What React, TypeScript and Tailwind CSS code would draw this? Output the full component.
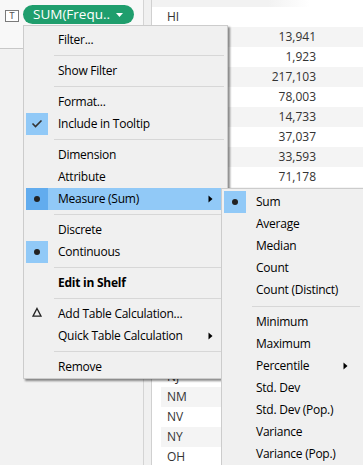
import React from "react";

const font = { fontFamily: '"Open Sans", "Noto Sans", sans-serif' };

// only rows whose label is not covered by the menus carry text
const states = [
  "HI", "", "", "", "", "", "", "", "", "", "", "",
  "", "", "", "", "", "", "NJ", "NM", "NV", "NY", "OH",
];

const values = [
  "", "13,941", "1,923", "217,103", "78,003", "14,733", "37,037", "33,593", "71,178",
];

type Item =
  | { sep: true }
  | {
      sep?: false;
      label: string;
      icon?: "check" | "dot" | "delta";
      checked?: boolean;
      active?: boolean;
      bold?: boolean;
      arrow?: boolean;
    };

const mainItems: Item[] = [
  { label: "Filter..." },
  { sep: true },
  { label: "Show Filter" },
  { sep: true },
  { label: "Format..." },
  { label: "Include in Tooltip", icon: "check", checked: true },
  { sep: true },
  { label: "Dimension" },
  { label: "Attribute" },
  { label: "Measure (Sum)", icon: "dot", checked: true, active: true, arrow: true },
  { sep: true },
  { label: "Discrete" },
  { label: "Continuous", icon: "dot", checked: true },
  { sep: true },
  { label: "Edit in Shelf", bold: true },
  { sep: true },
  { label: "Add Table Calculation...", icon: "delta" },
  { label: "Quick Table Calculation", arrow: true },
  { sep: true },
  { label: "Remove" },
];

const subItems: Item[] = [
  { label: "Sum", icon: "dot", checked: true },
  { label: "Average" },
  { label: "Median" },
  { label: "Count" },
  { label: "Count (Distinct)" },
  { sep: true },
  { label: "Minimum" },
  { label: "Maximum" },
  { label: "Percentile", arrow: true },
  { label: "Std. Dev" },
  { label: "Std. Dev (Pop.)" },
  { label: "Variance" },
  { label: "Variance (Pop.)" },
];

function MenuIcon({ kind }: { kind?: "check" | "dot" | "delta" }) {
  if (kind === "check")
    return (
      <svg width="22" height="22" viewBox="0 0 22 22">
        <path d="M6.5 10.5 L9.5 13.5 L15.5 7.5" fill="none" stroke="#333" strokeWidth="1.6" />
      </svg>
    );
  if (kind === "dot")
    return (
      <svg width="22" height="22" viewBox="0 0 22 22">
        <circle cx="11" cy="11" r="3" fill="#222" />
      </svg>
    );
  if (kind === "delta")
    return (
      <svg width="22" height="22" viewBox="0 0 22 22">
        <path d="M11 5.5 L15 13.2 L7 13.2 Z" fill="none" stroke="#222" strokeWidth="1.3" />
      </svg>
    );
  return null;
}

function Arrow() {
  return (
    <svg width="5" height="8" viewBox="0 0 5 8" className="shrink-0">
      <path d="M0.5 0.5 L4.5 4 L0.5 7.5 Z" fill="#000" />
    </svg>
  );
}

function MenuList({
  items,
  sepClass,
  sepHeight,
  arrowClass,
}: {
  items: Item[];
  sepClass: string;
  sepHeight: string;
  arrowClass: string;
}) {
  return (
    <>
      {items.map((it, i) =>
        it.sep ? (
          <div key={i} className={`flex items-center ${sepHeight}`}>
            <div className={`h-px bg-[#d7d7d7] ${sepClass}`} />
          </div>
        ) : (
          <div
            key={i}
            className={`flex h-[22px] items-center ${it.active ? "bg-[#91c9f7]" : ""}`}
          >
            <div
              className={`h-[22px] w-[22px] shrink-0 ${
                it.checked ? (it.active ? "bg-[#62acee]" : "bg-[#91c9f7]") : ""
              }`}
            >
              <MenuIcon kind={it.icon} />
            </div>
            <span
              className={`ml-[10px] flex-1 whitespace-nowrap tracking-[-0.25px] ${
                it.bold ? "font-bold" : ""
              }`}
            >
              {it.label}
            </span>
            {it.arrow && (
              <span className={arrowClass}>
                <Arrow />
              </span>
            )}
          </div>
        )
      )}
    </>
  );
}

export default function App() {
  return (
    <div
      className="relative flex h-[465px] w-[363px] overflow-hidden bg-white text-[12px] text-black"
      style={font}
    >
      {/* marks card panel */}
      <div className="w-[144px] shrink-0 border-r border-[#d4d4d4] bg-[#f2f2f2]">
        <div className="flex h-[49px] items-start border-b border-[#c8c8c8] bg-[#f8f8f8] pl-[5px] pt-[5px]">
          <div
            className="mt-[5px] flex h-[12px] w-[14px] items-center justify-center border border-[#7a7a7a] bg-white text-[9px] leading-none text-[#555]"
            style={{ fontFamily: '"DejaVu Sans Mono", monospace' }}
          >
            T
          </div>
          <div className="ml-[4px] flex h-[19px] w-[111px] items-center rounded-full bg-[#1f9e6d] pl-[10px] text-[13.5px] text-white">
            <span className="leading-none">SUM(Frequ..</span>
            <svg width="7" height="4" viewBox="0 0 7 4" className="ml-[6px]">
              <path d="M0 0 L7 0 L3.5 4 Z" fill="#fff" />
            </svg>
          </div>
        </div>
      </div>

      {/* splitter */}
      <div className="w-[8px] shrink-0 border-r border-[#d0d0d0] bg-[#f0f0f0]" />

      {/* view */}
      <div className="flex-1 text-[12px] text-[#333]">
        <div className="h-[7px] bg-[linear-gradient(to_right,#f2f2f2_0%,#f2f2f2_55%,#ffffff_75%)]" />
        {states.map((s, i) => (
          <div
            key={i}
            className={`ml-[9px] flex h-[20px] items-center ${i % 2 === 1 ? "bg-[#f4f4f4]" : "bg-white"}`}
          >
            <span className="w-[70px] pl-[6px]">{s}</span>
            <span className="w-[85px] text-right">{values[i] ?? ""}</span>
          </div>
        ))}
      </div>

      {/* context menu */}
      <div className="absolute left-[23px] top-[25px] w-[205px] border border-[#cccccc] bg-[#f0f0f0] px-[2px] pt-[3px] shadow-[2px_2px_2px_rgba(0,0,0,0.45)]">
        <MenuList
          items={mainItems}
          sepClass="ml-[28px] mr-[1px] flex-1"
          sepHeight="h-[9px]"
          arrowClass="mr-[12px]"
        />
      </div>

      {/* submenu */}
      <div className="absolute left-[221px] top-[188px] w-[145px] border border-[#cccccc] bg-[#f0f0f0] px-[2px] pt-[2px] shadow-[2px_2px_2px_rgba(0,0,0,0.45)]">
        <MenuList
          items={subItems}
          sepClass="ml-[28px] mr-[3px] flex-1"
          sepHeight="h-[10px]"
          arrowClass="mr-[15px]"
        />
      </div>
    </div>
  );
}
